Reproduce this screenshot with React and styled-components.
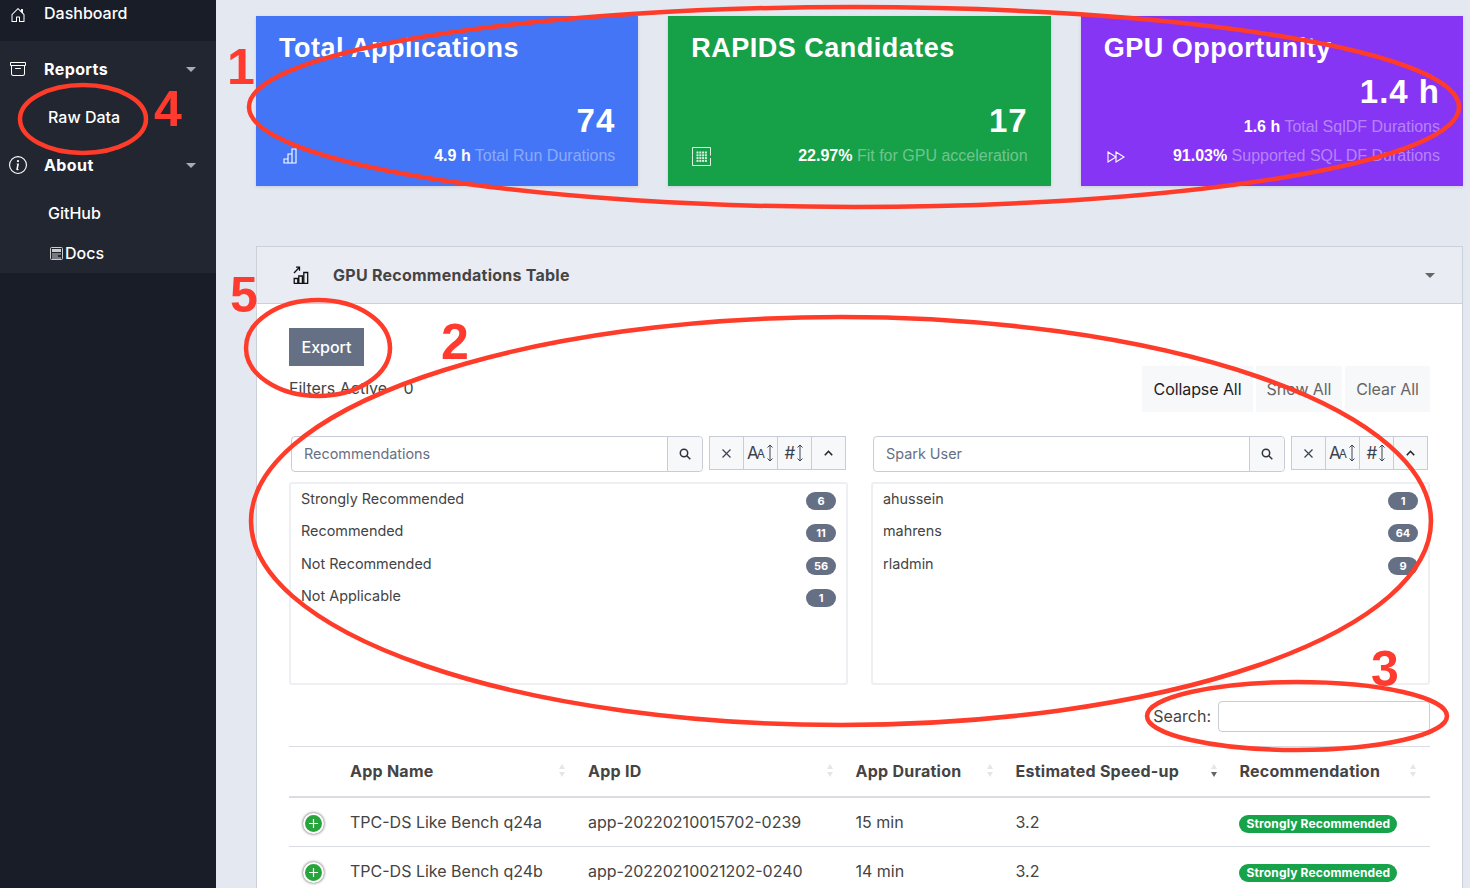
import React from "react";
import styled, { createGlobalStyle } from "styled-components";
import { BsHouseDoor, BsArchive, BsInfoCircle } from "react-icons/bs";

const GlobalStyle = createGlobalStyle`
    html, body {
        margin: 0;
        padding: 0;
        height: 888px;
        overflow: hidden;
        background: #e4e8f1;
        font-family: Inter, "Liberation Sans", sans-serif;
        color: #444;
    }
    * { box-sizing: border-box; }
`;

const Page = styled.div`
    position: relative;
    display: flex;
    width: 1470px;
    height: 888px;
    overflow: hidden;
`;

const Sidebar = styled.aside`
    width: 216px;
    flex-shrink: 0;
    background: #181d28;
    color: #fff;
`;

const TopItem = styled.div`
    height: 41px;
    display: flex;
    align-items: flex-start;
    padding: 4px 0 0 10px;
    font-size: 16px;
    font-weight: 500;
    line-height: 19px;
    svg { width: 16px; height: 16px; margin: 3px 18px 0 0; }
`;

const NavGroup = styled.div`
    height: 232px;
    background: #212630;
    padding-top: 18px;
`;

const NavHead = styled.div`
    height: 20px;
    margin-bottom: 28px;
    display: flex;
    align-items: center;
    padding: 0 20px 0 ${({ $icon }) => ($icon === 18 ? 9 : 10)}px;
    font-size: 16px;
    font-weight: 700;
    letter-spacing: 0.4px;
    svg {
        width: ${({ $icon }) => $icon}px;
        height: ${({ $icon }) => $icon}px;
        margin-right: ${({ $icon }) => ($icon === 18 ? 17 : 18)}px;
    }
`;

const Caret = styled.span`
    margin-left: auto;
    border-left: 5px solid transparent;
    border-right: 5px solid transparent;
    border-top: 5px solid ${({ $color }) => $color || "#aab"};
`;

const NavLink = styled.div`
    height: 20px;
    display: flex;
    align-items: center;
    padding-left: 48px;
    margin-bottom: ${({ $after }) => $after}px;
    font-size: 16px;
    font-weight: 500;
    svg { margin: 0 2px; }
`;

const Main = styled.main`
    flex: 1;
    padding: 16px 7px 0 40px;
    min-width: 0;
`;

const Cards = styled.section`
    display: grid;
    grid-template-columns: repeat(3, 1fr);
    gap: 30px;
    margin-bottom: 60px;
`;

const Card = styled.div`
    height: 170px;
    background: ${({ $bg }) => $bg};
    color: #fff;
    padding: 16px 23px 20px;
    display: flex;
    flex-direction: column;
    font-family: "Liberation Sans", Arial, sans-serif;
    box-shadow: 0 1px 3px rgba(40, 50, 80, 0.15);
`;

const CardTitle = styled.div`
    font-size: 27px;
    font-weight: 700;
    line-height: 32px;
    letter-spacing: 0.5px;
    margin-bottom: auto;
`;

const CardValue = styled.div`
    font-size: 33px;
    font-weight: 700;
    line-height: 38px;
    letter-spacing: 1px;
    text-align: right;
    margin-bottom: 6px;
`;

const CardSub = styled.div`
    font-size: 16px;
    line-height: 20px;
    text-align: right;
    margin-bottom: 9px;
    color: rgba(255, 255, 255, 0.4);
    b { font-weight: 700; color: #fff; }
`;

const CardFoot = styled.div`
    display: flex;
    justify-content: space-between;
    align-items: center;
    height: 20px;
    font-size: 16px;
    color: rgba(255, 255, 255, 0.4);
    b { font-weight: 700; color: #fff; }
    svg { color: #fff; display: block; }
`;

const Panel = styled.section`
    background: #fff;
    border: 1px solid #ccd0d8;
    border-bottom: 0;
    height: 700px;
`;

const PanelHead = styled.header`
    height: 57px;
    background: #eaecf3;
    border-bottom: 1px solid #ccd0d8;
    display: flex;
    align-items: center;
    padding: 0 27px 0 36px;
    font-size: 16px;
    font-weight: 700;
    letter-spacing: 0.25px;
    color: #444;
    svg { margin-right: 24px; }
`;

const PanelBody = styled.div`
    padding: 24px 32px 0;
`;

const ExportButton = styled.div`
    width: 75px;
    height: 38px;
    background: #667085;
    color: #fff;
    font-size: 16px;
    font-weight: 500;
    display: flex;
    align-items: center;
    justify-content: center;
`;

const FilterBar = styled.div`
    display: flex;
    justify-content: space-between;
    height: 46px;
    font-size: 16px;
    line-height: 44px;
    margin-bottom: 24px;
`;

const FilterButtons = styled.div`
    display: flex;
    gap: 3px;
`;

const FilterButton = styled.div`
    width: ${({ $w }) => $w}px;
    text-align: center;
    height: 46px;
    background: #f7f8fa;
    font-size: 16px;
    letter-spacing: -0.08px;
    line-height: 46px;
    color: ${({ $active }) => ($active ? "#1e2127" : "#666")};
`;

const Filters = styled.div`
    display: grid;
    grid-template-columns: 559px 559px;
    justify-content: space-between;
`;

const FilterTop = styled.div`
    display: flex;
    padding: 0 2px;
    margin-bottom: 10px;
    height: 36px;
`;

const FilterInput = styled.div`
    flex: 1;
    display: flex;
    align-items: center;
    justify-content: space-between;
    border: 1px solid #c8ccd6;
    border-radius: 4px;
    font-size: 14.4px;
    color: #667085;
    padding-left: 12px;
    height: 36px;
`;

const FilterLabel = styled.span`
    margin-top: -1px;
`;

const SearchBox = styled.span`
    width: 35px;
    height: 34px;
    background: #f7f8fa;
    border-left: 1px solid #c8ccd6;
    border-radius: 0 4px 4px 0;
    display: flex;
    align-items: center;
    justify-content: center;
    color: #2c313c;
`;

const ToolGroup = styled.div`
    display: flex;
    width: 137px;
    height: 34px;
    margin-left: 6px;
    border: 1px solid #c8ccd6;
    background: #f7f8fa;
`;

const ToolButton = styled.span`
    flex: 1;
    display: flex;
    align-items: center;
    justify-content: center;
    color: #3c4250;
    & + & { border-left: 1px solid #c8ccd6; }
`;

const SortGlyph = styled.span`
    display: flex;
    align-items: center;
    font-size: 17px;
    line-height: 1;
    small { font-size: 12px; margin-left: -2px; margin-top: 2px; }
`;

const ListBox = styled.div`
    height: 203px;
    border: 2px solid #eeeff2;
    border-radius: 3px;
    padding: 0 10px;
`;

const ListRow = styled.div`
    height: 32.4px;
    display: flex;
    align-items: flex-start;
    justify-content: space-between;
    font-size: 14.4px;
    line-height: 30px;
    color: #444;
`;

const Count = styled.span`
    width: 30px;
    height: 18px;
    margin-top: 8px;
    border-radius: 9px;
    background: #667085;
    color: #fff;
    font-size: 11px;
    font-weight: 700;
    line-height: 18px;
    text-align: center;
`;

const SearchRow = styled.div`
    display: flex;
    justify-content: flex-end;
    align-items: center;
    gap: 7px;
    margin-top: 16px;
    margin-bottom: 14px;
    font-size: 16px;
`;

const SearchLabel = styled.span`
    margin-top: -2px;
`;

const SearchField = styled.div`
    width: 212px;
    height: 31px;
    border: 1px solid #c8ccd6;
    border-radius: 4px;
`;

const TableHead = styled.div`
    display: grid;
    grid-template-columns: 61px 238px 267.5px 160px 224px 190.5px;
    height: 52px;
    padding-bottom: 2px;
    align-items: center;
    border-top: 1px solid #d9dde3;
    border-bottom: 2px solid #d9dde3;
    font-size: 16px;
    font-weight: 700;
    letter-spacing: 0.25px;
    color: #444;
`;

const HeadCell = styled.div`
    display: flex;
    justify-content: space-between;
    align-items: center;
    padding-right: ${({ $pad }) => $pad}px;
`;

const SortArrows = styled.span`
    display: flex;
    flex-direction: column;
    gap: 3px;
    i {
        display: block;
        border-left: 3.5px solid transparent;
        border-right: 3.5px solid transparent;
    }
    i:first-child { border-bottom: 5px solid #e4e6ea; }
    i:last-child { border-top: 5px solid ${({ $sorted }) => ($sorted ? "#666" : "#e4e6ea")}; }
`;

const Row = styled.div`
    display: grid;
    grid-template-columns: 61px 238px 267.5px 160px 224px 190.5px;
    height: 49px;
    align-items: center;
    border-bottom: 1px solid #d9dde3;
    font-size: 16px;
    color: #444;
`;

const Expand = styled.span`
    width: 21px;
    height: 21px;
    margin: 3px 0 0 14px;
    border: 2px solid #fff;
    border-radius: 50%;
    background: #28a43c;
    box-shadow: 0 0 3px #444;
    color: #fff;
    display: flex;
    align-items: center;
    justify-content: center;
`;

const Pill = styled.span`
    display: inline-block;
    margin-left: -1px;
    padding: 0 7px 0 8px;
    height: 18px;
    border-radius: 9px;
    background: #16a34a;
    color: #fff;
    font-size: 12px;
    font-weight: 700;
    letter-spacing: 0.15px;
    line-height: 18px;
`;

const Overlay = styled.svg`
    position: absolute;
    left: 0;
    top: 0;
    width: 1470px;
    height: 888px;
    pointer-events: none;
`;

const Mark = styled.span`
    position: absolute;
    left: ${({ $x }) => $x}px;
    top: ${({ $y }) => $y}px;
    font-family: "Liberation Sans", Arial, sans-serif;
    font-size: 50px;
    font-weight: 700;
    line-height: 50px;
    color: #ff3b30;
`;

const gridDots = [];
for (let y = 4.5; y < 14; y += 2.8) {
    for (let x = 4.5; x < 14; x += 2.8) gridDots.push([x, y]);
}

function BarsIcon() {
    return (
        <svg width="15" height="16" viewBox="0 0 15 16" fill="none" stroke="currentColor" strokeWidth="1.1" style={{ marginLeft: 4 }}>
            <path d="M1 15v-4h4V6h4V15zM9 15V1h4v14zM1 15h12M5 11v4" />
        </svg>
    );
}

function GridIcon() {
    return (
        <svg width="19" height="19" viewBox="0 0 19 19" fill="none" stroke="currentColor" opacity="0.85" style={{ marginLeft: 1 }}>
            <path d="M0.500 0.500h18v8M18.500 11v7.500h-18V11M0.500 8.500v-8" />
            <path d="M0.500 8.500V11" />
            {gridDots.map(([x, y]) => (
                <rect key={x + "-" + y} x={x} y={y} width="2" height="2" fill="currentColor" stroke="none" />
            ))}
        </svg>
    );
}

function ForwardIcon() {
    return (
        <svg width="18" height="12" viewBox="0 0 18 12" fill="none" stroke="currentColor" strokeWidth="1.1" style={{ marginLeft: 3, marginTop: 2 }}>
            <path d="M1 1l8 5-8 5zM9 1l8 5-8 5z" />
        </svg>
    );
}

function ChartUpIcon() {
    return (
        <svg width="16" height="18" viewBox="0 0 16 18" fill="none" stroke="#111" strokeWidth="1.3">
            <path d="M0.700 17.300h14.600M1.200 17.300v-4.800h3.600v4.800M5.800 17.300V10h3.600v7.300M10.800 17.300V6.500h3.900v10.800" />
            <path d="M1 7l5.200-5.500M3 1.200h3.500v3.500" />
        </svg>
    );
}

function DocIcon() {
    return (
        <svg width="13" height="13" viewBox="0 0 13 13" fill="none" stroke="#ccc">
            <rect x="0.500" y="0.500" width="12" height="12" rx="1" />
            <rect x="2" y="2" width="9" height="3" fill="#ccc" stroke="none" />
            <path d="M2 7h9M2 9h6M2 11h9" />
        </svg>
    );
}

function SearchIcon() {
    return (
        <svg width="12" height="12" viewBox="0 0 12 12" fill="none" stroke="currentColor" strokeWidth="1.5">
            <circle cx="5" cy="5" r="3.700" />
            <path d="M7.800 7.800l3.500 3.500" />
        </svg>
    );
}

function CloseIcon() {
    return (
        <svg width="9" height="9" viewBox="0 0 9 9" fill="none" stroke="currentColor" strokeWidth="1.200">
            <path d="M0.500 0.500l8 8M8.500 0.500l-8 8" />
        </svg>
    );
}

function UpIcon() {
    return (
        <svg width="9" height="6" viewBox="0 0 9 6" fill="none" stroke="#222" strokeWidth="1.600">
            <path d="M0.800 5.200L4.500 1.300l3.700 3.900" />
        </svg>
    );
}

function SortLine() {
    return (
        <svg width="8" height="18" viewBox="0 0 8 18" fill="none" stroke="currentColor" style={{ marginLeft: 1 }}>
            <path d="M4 1v16M1.500 3.500L4 1l2.500 2.500M1.500 14.500L4 17l2.500-2.500" />
        </svg>
    );
}

const filters = [
    {
        title: "Recommendations",
        rows: [
            ["Strongly Recommended", 6],
            ["Recommended", 11],
            ["Not Recommended", 56],
            ["Not Applicable", 1],
        ],
    },
    {
        title: "Spark User",
        rows: [
            ["ahussein", 1],
            ["mahrens", 64],
            ["rladmin", 9],
        ],
    },
];

const columns = [
    ["App Name", 23],
    ["App ID", 23],
    ["App Duration", 23],
    ["Estimated Speed-up", 23, true],
    ["Recommendation", 14],
];

const apps = [
    ["TPC-DS Like Bench q24a", "app-20220210015702-0239", "15 min", "3.2"],
    ["TPC-DS Like Bench q24b", "app-20220210021202-0240", "14 min", "3.2"],
];

function Filter({ filter }) {
    return (
        <div>
            <FilterTop>
                <FilterInput>
                    <FilterLabel>{filter.title}</FilterLabel>
                    <SearchBox><SearchIcon /></SearchBox>
                </FilterInput>
                <ToolGroup>
                    <ToolButton><CloseIcon /></ToolButton>
                    <ToolButton><SortGlyph>A<small>A</small><SortLine /></SortGlyph></ToolButton>
                    <ToolButton><SortGlyph>#<SortLine /></SortGlyph></ToolButton>
                    <ToolButton><UpIcon /></ToolButton>
                </ToolGroup>
            </FilterTop>
            <ListBox>
                {filter.rows.map(([name, count]) => (
                    <ListRow key={name}>
                        {name}
                        <Count>{count}</Count>
                    </ListRow>
                ))}
            </ListBox>
        </div>
    );
}

export default function App() {
    return (
        <Page>
            <GlobalStyle />
            <Sidebar>
                <TopItem><BsHouseDoor />Dashboard</TopItem>
                <NavGroup>
                    <NavHead $icon={16}><BsArchive />Reports<Caret /></NavHead>
                    <NavLink $after={28}>Raw Data</NavLink>
                    <NavHead $icon={18}><BsInfoCircle />About<Caret /></NavHead>
                    <NavLink $after={20}>GitHub</NavLink>
                    <NavLink><DocIcon />Docs</NavLink>
                </NavGroup>
            </Sidebar>
            <Main>
                <Cards>
                    <Card $bg="#4475f6">
                        <CardTitle>Total Applications</CardTitle>
                        <CardValue>74</CardValue>
                        <CardFoot>
                            <BarsIcon />
                            <span><b>4.9 h</b> Total Run Durations</span>
                        </CardFoot>
                    </Card>
                    <Card $bg="#16a048">
                        <CardTitle>RAPIDS Candidates</CardTitle>
                        <CardValue>17</CardValue>
                        <CardFoot>
                            <GridIcon />
                            <span><b>22.97%</b> Fit for GPU acceleration</span>
                        </CardFoot>
                    </Card>
                    <Card $bg="#8635f5">
                        <CardTitle>GPU Opportunity</CardTitle>
                        <CardValue>1.4 h</CardValue>
                        <CardSub><b>1.6 h</b> Total SqlDF Durations</CardSub>
                        <CardFoot>
                            <ForwardIcon />
                            <span><b>91.03%</b> Supported SQL DF Durations</span>
                        </CardFoot>
                    </Card>
                </Cards>
                <Panel>
                    <PanelHead>
                        <ChartUpIcon />
                        GPU Recommendations Table
                        <Caret $color="#666" />
                    </PanelHead>
                    <PanelBody>
                        <ExportButton>Export</ExportButton>
                        <FilterBar>
                            Filters Active - 0
                            <FilterButtons>
                                <FilterButton $active $w={111}>Collapse All</FilterButton>
                                <FilterButton $w={86}>Show All</FilterButton>
                                <FilterButton $w={85}>Clear All</FilterButton>
                            </FilterButtons>
                        </FilterBar>
                        <Filters>
                            {filters.map((filter) => (
                                <Filter key={filter.title} filter={filter} />
                            ))}
                        </Filters>
                        <SearchRow>
                            <SearchLabel>Search:</SearchLabel>
                            <SearchField />
                        </SearchRow>
                        <TableHead>
                            <span />
                            {columns.map(([name, pad, sorted]) => (
                                <HeadCell key={name} $pad={pad}>
                                    {name}
                                    <SortArrows $sorted={sorted}><i /><i /></SortArrows>
                                </HeadCell>
                            ))}
                        </TableHead>
                        {apps.map((app) => (
                            <Row key={app[1]}>
                                <Expand>
                                    <svg width="9" height="9" viewBox="0 0 9 9" stroke="#fff" strokeWidth="1.200">
                                        <path d="M4.500 0v9M0 4.500h9" />
                                    </svg>
                                </Expand>
                                {app.map((value) => (
                                    <span key={value}>{value}</span>
                                ))}
                                <span><Pill>Strongly Recommended</Pill></span>
                            </Row>
                        ))}
                    </PanelBody>
                </Panel>
            </Main>
            <Overlay viewBox="0 0 1470 888" fill="none" stroke="#ff3b2a" strokeWidth="4.500">
                <ellipse cx="854" cy="107" rx="605" ry="100" />
                <ellipse cx="841" cy="521" rx="590" ry="204" />
                <ellipse cx="1297" cy="716" rx="150" ry="34" />
                <ellipse cx="83" cy="119" rx="63" ry="34" />
                <ellipse cx="318" cy="348" rx="72" ry="48" />
            </Overlay>
            <Mark $x={227} $y={42}>1</Mark>
            <Mark $x={441} $y={317}>2</Mark>
            <Mark $x={1371} $y={644}>3</Mark>
            <Mark $x={154} $y={84}>4</Mark>
            <Mark $x={230} $y={270}>5</Mark>
        </Page>
    );
}
